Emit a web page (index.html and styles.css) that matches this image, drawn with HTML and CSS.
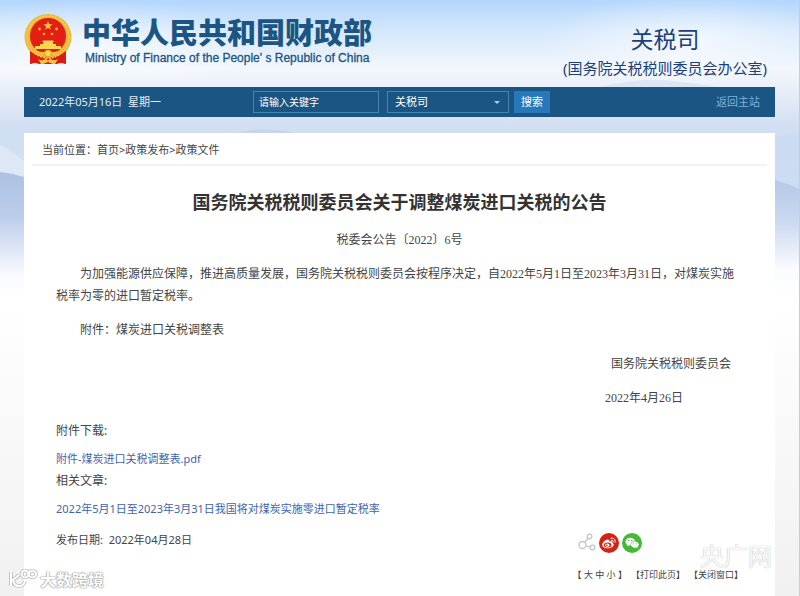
FILE: index.html
```html
<!DOCTYPE html>
<html lang="zh-CN">
<head>
<meta charset="utf-8">
<meta name="viewport" content="width=device-width, initial-scale=1">
<title>国务院关税税则委员会关于调整煤炭进口关税的公告</title>
<link rel="stylesheet" href="styles.css">
</head>
<body>
<svg class="scenery" viewBox="0 0 800 300" preserveAspectRatio="none" aria-hidden="true">
  <defs>
    <linearGradient id="sky" x1="0" y1="0" x2="0" y2="1">
      <stop offset="0" stop-color="#b3d6fd"/>
      <stop offset=".1" stop-color="#d3e7fc"/>
      <stop offset=".23" stop-color="#f3f7fd"/>
      <stop offset=".29" stop-color="#eaf0f9"/>
      <stop offset=".42" stop-color="#d2dff2"/>
      <stop offset=".6" stop-color="#cfdff3"/>
      <stop offset="1" stop-color="#fff"/>
    </linearGradient>
    <linearGradient id="hill" x1="0" y1="0" x2="0" y2="1">
      <stop offset="0" stop-color="#aec1e3"/>
      <stop offset=".35" stop-color="#bccdea"/>
      <stop offset=".8" stop-color="#f8faff"/>
      <stop offset="1" stop-color="#fff"/>
    </linearGradient>
    <linearGradient id="hill-far" x1="0" y1="0" x2="0" y2="1">
      <stop offset="0" stop-color="#b5c8e8"/>
      <stop offset=".35" stop-color="#cbd9f0"/>
      <stop offset=".75" stop-color="#fbfcff"/>
      <stop offset="1" stop-color="#fff"/>
    </linearGradient>
    <radialGradient id="glow">
      <stop offset="0" stop-color="#fff" stop-opacity=".65"/>
      <stop offset="1" stop-color="#fff" stop-opacity="0"/>
    </radialGradient>
  </defs>
  <rect width="800" height="300" fill="url(#sky)"/>
  <ellipse cx="90" cy="45" rx="190" ry="45" fill="url(#glow)"/>
  <ellipse cx="690" cy="40" rx="150" ry="45" fill="url(#glow)"/>
  <path d="M600 87Q640 78 665 80Q700 84 720 87Z" fill="#cbdaef" opacity=".5"/>
  <path d="M235 133Q258 127 285 131L295 133Z" fill="#bccce5" opacity=".5"/>
  <path d="M0 145Q10 150 24 161V180H0Z" fill="#dde8f7"/>
  <path d="M0 172Q12 173 24 177V300H0Z" fill="url(#hill)"/>
  <path d="M776 136Q788 133 800 134V190H776Z" fill="#c9daf2" opacity=".7"/>
  <path d="M776 180Q788 183 800 189V300H776Z" fill="url(#hill-far)"/>
</svg>

<header class="masthead">
  <div class="brand">
    <svg class="emblem" viewBox="0 0 48 51" aria-hidden="true">
      <path d="M6 32L6 50Q11 48 16 50H32Q37 48 42 50L42 32Z" fill="#dc1c12"/>
      <ellipse cx="24" cy="23" rx="23.500" ry="23" fill="#eeb83a"/>
      <path d="M6 37L6 50Q11 48 16 50H32Q37 48 42 50L42 37Q24 50 6 37Z" fill="#dc1c12"/>
      <ellipse cx="24" cy="23" rx="21" ry="21" fill="none" stroke="#f6cd5c" stroke-width="1.500" stroke-dasharray="2 1"/>
      <circle cx="24" cy="22" r="18" fill="#e31f13"/>
      <path d="M24 7l1.200 3.200 3.400.1-2.700 2.100 1 3.300-2.900-1.900-2.900 1.900 1-3.300-2.700-2.100 3.400-.1z" fill="#fbc945"/>
      <g fill="#fbb040"><circle cx="15.500" cy="15" r="1.400"/><circle cx="32.500" cy="15" r="1.400"/><circle cx="20" cy="20" r="1.300"/><circle cx="28" cy="20" r="1.300"/></g>
      <path d="M18 28l1-1.500h10l1 1.500h-1v2h3v2h5v3H11v-3h5v-2h3v-2z" fill="#fbd64e"/>
      <path d="M8 36Q16 38 20 38Q24 34 28 38Q32 38 40 36L38 40Q31 41 28 42Q24 46 20 42Q17 41 10 40Z" fill="#f3bd3b"/>
      <circle cx="24" cy="39.500" r="3.500" fill="#fbd64e" stroke="#e3981f"/>
      <path d="M14 45Q19 48 22 44L24 47 26 44Q29 48 34 45L31 50H29L24 48 19 50H17Z" fill="#f7c441"/>
    </svg>
    <div class="brand-text">
      <div class="brand-cn">中华人民共和国财政部</div>
      <div class="brand-en">Ministry of Finance of the People' s Republic of China</div>
    </div>
  </div>
  <div class="department">
    <div class="department-name">关税司</div>
    <div class="department-office">(国务院关税税则委员会办公室)</div>
  </div>
</header>

<div class="toolbar">
  <span class="today">2022年05月16日&nbsp; 星期一</span>
  <form class="search">
    <input class="keyword" type="text" placeholder="请输入关键字" aria-label="关键字">
    <span class="scope-wrap"><select class="scope" aria-label="搜索范围"><option>关税司</option></select></span>
    <button class="submit" type="button">搜索</button>
  </form>
  <a class="home" href="#">返回主站</a>
</div>

<main class="panel">
  <nav class="crumbs">当前位置：<a href="#">首页</a>&gt;<a href="#">政策发布</a>&gt;<a href="#">政策文件</a></nav>
  <h1>国务院关税税则委员会关于调整煤炭进口关税的公告</h1>
  <article class="notice">
    <p class="number">税委会公告〔2022〕6号</p>
    <p>为加强能源供应保障，推进高质量发展，国务院关税税则委员会按程序决定，自2022年5月1日至2023年3月31日，对煤炭实施税率为零的进口暂定税率。</p>
    <p>附件：煤炭进口关税调整表</p>
    <p class="signer">国务院关税税则委员会</p>
    <p class="signed-on">2022年4月26日</p>
  </article>
  <section class="related">
    <h2>附件下载:</h2>
    <a href="#">附件-煤炭进口关税调整表.pdf</a>
    <h2>相关文章:</h2>
    <a href="#">2022年5月1日至2023年3月31日我国将对煤炭实施零进口暂定税率</a>
  </section>
  <footer class="meta">
    <span class="published">发布日期:&nbsp; 2022年04月28日</span>
    <div class="actions">
      <div class="share">
        <svg viewBox="0 0 18 20" width="18" height="20" fill="none" stroke="#c4c4c4" stroke-width="1.300" aria-hidden="true"><circle cx="4.500" cy="12" r="3.500"/><circle cx="11.500" cy="3.500" r="2.300"/><circle cx="14.500" cy="14.500" r="2.300"/><path d="M6.500 9L10.200 5.500M8 12.800l4.200 1.200"/></svg>
        <a href="#" aria-label="微博"><svg viewBox="0 0 20 20" width="20" height="20"><circle cx="10" cy="10" r="10" fill="#d52313"/><path d="M8.500 6.500C6 6.800 3 10 3.300 12.200c.4 4.300 10.500 4.200 11.400-.2.200-1.200-.6-1.700-1.400-2 .5-1.800-.9-2.200-3-1.300.3-1.400-.3-2.200-1.800-2.200z" fill="#fff"/><ellipse cx="8.700" cy="12" rx="3.800" ry="2.600" fill="#d52313"/><ellipse cx="8.300" cy="12.200" rx="2.200" ry="1.800" fill="#fff"/><circle cx="7.800" cy="12.400" r=".8" fill="#d52313"/><path d="M12 5.200c2.700-.7 4.800 1.400 4 4M12.300 7.200c1.300-.3 2.200.6 1.900 1.800" fill="none" stroke="#fff" stroke-linecap="round"/></svg></a>
        <a href="#" aria-label="微信"><svg viewBox="0 0 20 20" width="20" height="20"><circle cx="10" cy="10" r="10" fill="#43b936"/><path d="M8.300 4.800C5.500 4.800 3.500 6.500 3.500 8.700c0 1.300.7 2.300 1.800 3l-.4 1.600 1.700-.9c.6.200 1.300.2 2 .2-.3-2.800 2-4.700 4.500-4.600-.5-1.900-2.500-3.200-4.800-3.200z" fill="#fff"/><path d="M12.900 8.400c-2.200 0-3.900 1.400-3.900 3.200s1.700 3.200 3.900 3.200l1.300-.2 1.400.8-.3-1.400c.9-.6 1.500-1.400 1.500-2.400 0-1.800-1.700-3.200-3.900-3.200z" fill="#fff"/><g fill="#43b936"><circle cx="6.700" cy="7.500" r=".7"/><circle cx="9.800" cy="7.500" r=".7"/><circle cx="11.600" cy="10.700" r=".5"/><circle cx="14.200" cy="10.700" r=".5"/></g></svg></a>
      </div>
      <div class="tools"><span>【 <a href="#">大</a> <a href="#">中</a> <a href="#">小</a> 】</span><a href="#">【打印此页】</a><a href="#">【关闭窗口】</a></div>
    </div>
  </footer>
</main>

<div class="mark mark-left">
  <svg viewBox="0 0 30 20" width="30" height="20" fill="none" aria-hidden="true">
    <g stroke="#b9b9b9" stroke-width="3.600"><path d="M3 3V17M11 6L5 11Q6 17 11 17Q16 17 17 12"/><circle cx="17" cy="5" r="3.500"/><circle cx="24.500" cy="5" r="3.500"/></g>
    <g stroke="#fff" stroke-width="2"><path d="M3 3V17M11 6L5 11Q6 17 11 17Q16 17 17 12"/><circle cx="17" cy="5" r="3.500"/><circle cx="24.500" cy="5" r="3.500"/></g>
  </svg>
  <span>大数跨境</span>
</div>
<div class="mark mark-right">央广网</div>
</body>
</html>
```
FILE: styles.css
```css
* { box-sizing: border-box; }

body {
  position: relative;
  display: flex;
  flex-direction: column;
  min-height: 100vh;
  margin: 0;
  padding: 0 24px;
  border-right: 1px solid #c9ccd1;
  background: linear-gradient(#fff 300px, #f1f1f1 100%);
  color: #444;
  font: 11px/22px "Noto Sans", "Noto Sans CJK SC", sans-serif;
  overflow-x: hidden;
}

a { color: inherit; text-decoration: none; }
h1, h2, p { margin: 0; }

.scenery {
  position: absolute;
  z-index: -1;
  top: 0;
  left: 0;
  width: 100%;
  height: 300px;
}

.masthead {
  display: flex;
  justify-content: space-between;
  height: 87px;
  padding: 14px 8px 0 0;
}
.brand { display: flex; gap: 10px; }
.emblem { width: 48px; height: 51px; }
.brand-text { color: #1b5583; white-space: nowrap; }
.brand-cn {
  font-size: 29px;
  line-height: 37px;
  font-weight: 900;
}
.brand-en {
  padding-left: 3px;
  font: 12px/14px "Liberation Sans", sans-serif;
  -webkit-text-stroke: 0.3px #1b5583;
}
.department {
  padding-top: 8px;
  color: #1c3f7c;
  text-align: center;
  white-space: nowrap;
}
.department-name { font-size: 23px; line-height: 34px; }
.department-office { font-size: 15px; line-height: 25px; }

.toolbar {
  display: grid;
  grid-template-columns: 214px 1fr auto;
  align-items: center;
  height: 30px;
  padding: 0 15px;
  background: #1b5583;
  color: #e6eef5;
}
.search { display: flex; align-items: center; }
.keyword, .scope, .submit {
  height: 22px;
  margin: 0;
  border: 1px solid #4384b5;
  border-radius: 0;
  background: transparent;
  color: #fff;
  font: inherit;
  line-height: 20px;
}
.keyword { width: 126px; margin-right: 8px; padding: 0 5px; font-size: 10px; }
.keyword::placeholder { color: #fff; opacity: 1; }
.scope-wrap { position: relative; margin-right: 5px; }
.scope-wrap::after {
  content: "";
  position: absolute;
  top: 10px;
  right: 9px;
  border: 3px solid transparent;
  border-top-color: #a9cdea;
  border-bottom: 0;
  pointer-events: none;
}
.scope { display: block; width: 122px; padding: 0 7px; appearance: none; }
.submit { width: 36px; padding: 0; border-color: #267abb; background: #267abb; }
.home { color: #7fb1d8; }

.panel {
  flex: 1;
  margin-top: 16px;
  padding: 0 8px 10px;
  background: #fff;
}
.crumbs {
  padding: 6px 10px 3px;
  border-bottom: 2px solid #f2f2f2;
}
h1 {
  padding-top: 20px;
  color: #333;
  font-size: 18px;
  line-height: 32px;
  text-align: center;
}
.notice {
  display: flex;
  flex-direction: column;
  gap: 12px;
  padding: 11px 24px 0;
  font: 12px/22px "Liberation Serif", "Noto Sans CJK SC", sans-serif;
}
.notice p { text-indent: 2em; }
.notice .number { text-align: center; text-indent: 0; }
.notice .signer { padding-right: 1em; text-align: right; }
.notice .signed-on { padding-right: 5em; text-align: right; }

.related {
  display: flex;
  flex-direction: column;
  align-items: flex-start;
  padding: 11px 24px 0;
}
.related h2 { margin-bottom: 6px; font-size: 12px; font-weight: 400; line-height: 22px; }
.related a { color: #4163ae; }

.meta {
  display: flex;
  justify-content: space-between;
  padding: 9px 24px 0;
}
.actions { padding-top: 4px; }
.share { display: flex; gap: 3px; padding-left: 5px; }
.share svg { display: block; }
.tools {
  display: flex;
  gap: 4px;
  padding-top: 11px;
  font-size: 9px;
  white-space: nowrap;
}

.mark {
  position: absolute;
  color: #fff;
  pointer-events: none;
}
.mark-left {
  left: 8px;
  bottom: 5px;
  display: flex;
  gap: 2px;
  font-size: 16px;
  font-weight: 700;
  text-shadow: 0 0 1px #888, 0 0 1px #999, 0 0 2px #aaa;
}
.mark-right {
  right: 27px;
  bottom: 28px;
  color: #fafafa;
  font-size: 24px;
  line-height: 24px;
  text-shadow: 0 0 1px #bbb, 0 0 1px #ccc;
}
```
